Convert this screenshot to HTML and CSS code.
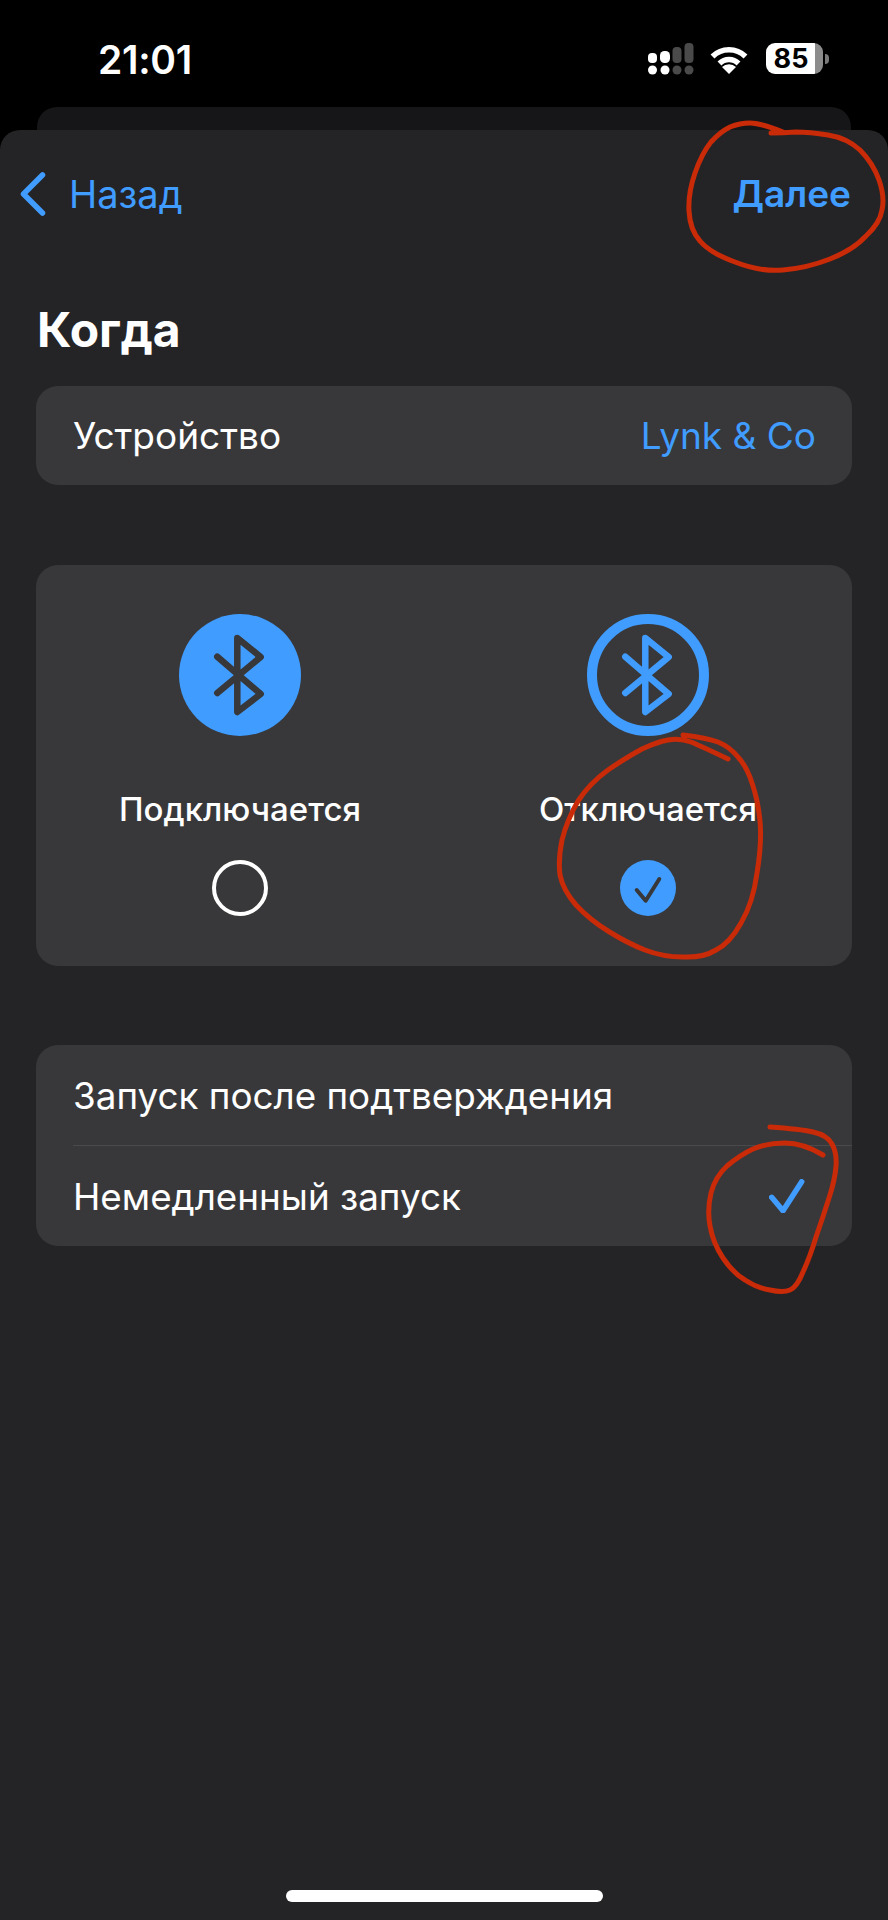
FILE: index.html
```html
<!DOCTYPE html>
<html lang="ru">
<head>
<meta charset="utf-8">
<title>Когда</title>
<link rel="stylesheet" href="styles.css">
</head>
<body>
<div class="screen">
  <header class="status">
    <span class="time">21:01</span>
    <div class="status-icons">
      <svg class="signal" width="48" height="32" viewBox="0 0 48 32">
        <g fill="#fff">
          <rect x="1" y="10" width="9" height="10" rx="4"/><rect x="13" y="8" width="10" height="12" rx="4.500"/>
          <circle cx="5.500" cy="27" r="4.500"/><circle cx="18" cy="27" r="4.500"/>
        </g>
        <g fill="#4a4a4a">
          <rect x="25.500" y="4" width="9" height="16" rx="4"/><rect x="37.500" y="0" width="9" height="20" rx="4"/>
          <circle cx="30" cy="27" r="4.500"/><circle cx="42" cy="27" r="4.500"/>
        </g>
      </svg>
      <svg class="wifi" width="38" height="29" viewBox="0 0 38 29">
        <path d="M2.500 11.500 A23.500 23.500 0 0 1 35.500 11.500" fill="none" stroke="#fff" stroke-width="5.500"/>
        <path d="M9.500 18.500 A13.500 13.500 0 0 1 28.500 18.500" fill="none" stroke="#fff" stroke-width="5.500"/>
        <path d="M19 29 L12 22 A10 10 0 0 1 26 22 Z" fill="#fff"/>
      </svg>
      <div class="battery-wrap">
        <div class="battery">85</div>
        <span class="battery-cap"></span>
      </div>
    </div>
  </header>
  <div class="peek"></div>
  <main class="sheet">
    <nav class="nav">
      <a class="back">
        <svg class="chevron" width="26" height="44" viewBox="0 0 26 44">
          <path d="M22.500 3 L3.500 22 L22.500 41" fill="none" stroke="#409cff" stroke-width="5.500" stroke-linecap="round" stroke-linejoin="round"/>
        </svg>
        <span>Назад</span>
      </a>
      <a class="next">Далее</a>
    </nav>
    <h1 class="title">Когда</h1>
    <section class="card row device">
      <span>Устройство</span>
      <span class="value">Lynk &amp; Co</span>
    </section>
    <section class="card options">
      <div class="option">
        <svg class="bt" width="122" height="122" viewBox="0 0 122 122">
          <circle cx="61" cy="61" r="61" fill="#409cff"/>
          <path d="M38.300 42.700 L81.700 80 L58.300 98 V24 L81.700 43 L38.300 79" fill="none" stroke="#38383a" stroke-width="6.500" stroke-linecap="round" stroke-linejoin="round"/>
        </svg>
        <span class="label">Подключается</span>
        <span class="radio"></span>
      </div>
      <div class="option">
        <svg class="bt" width="122" height="122" viewBox="0 0 122 122">
          <circle cx="61" cy="61" r="56" fill="none" stroke="#409cff" stroke-width="10"/>
          <path d="M38.300 42.700 L81.700 80 L58.300 98 V24 L81.700 43 L38.300 79" fill="none" stroke="#409cff" stroke-width="6.500" stroke-linecap="round" stroke-linejoin="round"/>
        </svg>
        <span class="label">Отключается</span>
        <svg class="radio-on" width="56" height="56" viewBox="0 0 56 56">
          <circle cx="28" cy="28" r="28" fill="#409cff"/>
          <path d="M16.700 30 L25.700 40.700 L39.300 19" fill="none" stroke="#38383a" stroke-width="4" stroke-linecap="round" stroke-linejoin="round"/>
        </svg>
      </div>
    </section>
    <section class="card list">
      <div class="row item"><span>Запуск после подтверждения</span></div>
      <div class="row">
        <span>Немедленный запуск</span>
        <svg class="tick" width="36" height="34" viewBox="0 0 36 34">
          <path d="M2.700 18.300 L14 31.700 L32.700 2.700" fill="none" stroke="#409cff" stroke-width="5.500" stroke-linecap="round" stroke-linejoin="round"/>
        </svg>
      </div>
    </section>
    <div class="home-bar"></div>
  </main>
  <svg class="ink" width="888" height="1920" viewBox="0 0 888 1920">
    <path d="M783 132 Q760 123 750 123 Q740 123 730 127 Q720 132 711 142 Q702 153 695 173 Q688 193 689 211 Q690 230 700 241 Q710 253 735 262 Q760 272 783 270 Q807 268 830 259 Q853 250 866 236 Q880 223 882 210 Q885 197 879 180 Q873 163 860 150 Q847 138 828 135 Q810 132 796 132 Q783 133 771 133"/>
    <path d="M728 759 Q703 747 691 742 Q680 738 668 740 Q657 742 642 749 Q627 757 608 770 Q590 783 578 801 Q567 820 562 840 Q558 860 560 875 Q563 890 576 905 Q590 920 608 931 Q627 943 645 950 Q663 957 683 957 Q703 958 716 950 Q730 943 741 923 Q753 903 757 873 Q762 843 760 821 Q758 800 752 783 Q747 767 738 757 Q730 747 718 742 Q707 738 683 735"/>
    <path d="M770 1127 Q800 1129 813 1132 Q827 1135 832 1144 Q837 1153 836 1166 Q835 1180 829 1198 Q823 1217 816 1237 Q810 1257 803 1272 Q797 1287 790 1290 Q783 1293 770 1290 Q757 1288 745 1280 Q733 1273 723 1258 Q713 1243 710 1226 Q707 1210 711 1193 Q715 1177 727 1166 Q740 1155 753 1149 Q767 1143 785 1143 Q803 1143 823 1155"/>
  </svg>
</div>
</body>
</html>
```
FILE: styles.css
```css
* { box-sizing: border-box; }
html, body { margin: 0; padding: 0; background: #000; }
body { font-family: Inter, "Liberation Sans", sans-serif; color: #fff; }
.screen { position: relative; width: 888px; height: 1920px; overflow: hidden; display: flex; flex-direction: column; }

.status { height: 107px; flex: none; display: flex; justify-content: space-between; align-items: flex-start; padding: 0 59px 0 98px; }
.time { font-size: 39px; font-weight: 600; line-height: 44px; margin-top: 38px; letter-spacing: -0.3px; }
.status-icons { display: flex; align-items: flex-start; margin-top: 43px; }
.signal { margin-right: 15px; }
.wifi { margin-top: 2px; margin-right: 18px; }
.battery-wrap { display: flex; align-items: center; }
.battery { width: 57px; height: 31px; border-radius: 9px; background: linear-gradient(90deg, #fff 86%, #8c8c8c 86%); color: #000; font-size: 27px; font-weight: 700; line-height: 31px; text-align: center; padding-right: 7px; }
.battery-cap { width: 4px; height: 10px; margin-left: 2px; background: #7a7a7a; border-radius: 0 5px 5px 0; }

.peek { height: 23px; flex: none; margin: 0 37px; background: #161618; border-radius: 20px 20px 0 0; }

.sheet { flex: 1; display: flex; flex-direction: column; background: #242426; border-radius: 20px 20px 0 0; padding: 0 36px; }
.nav { height: 127px; flex: none; display: flex; justify-content: space-between; align-items: center; margin: 0 1px 0 -16px; }
.back { display: flex; align-items: center; color: #409cff; font-size: 38px; gap: 23px; }
.next { color: #409cff; font-size: 37px; font-weight: 600; }
.title { margin: 43px 0 26px 1px; font-size: 48px; line-height: 60px; font-weight: 700; height: 60px; }

.card { background: #38383a; border-radius: 22px; font-size: 37px; }
.row { display: flex; justify-content: space-between; align-items: center; height: 100px; padding: 0 36px 0 37px; }
.device { margin-bottom: 80px; height: 99px; }
.value { color: #409cff; }

.options { display: grid; grid-template-columns: 1fr 1fr; height: 401px; margin-bottom: 79px; }
.option { display: flex; flex-direction: column; align-items: center; padding-top: 49px; }
.label { font-size: 33px; line-height: 40px; margin-top: 53px; margin-bottom: 1px; font-weight: 500; }
.radio { width: 56px; height: 56px; margin-top: 30px; border-radius: 50%; border: 4px solid #fff; }
.radio-on { margin-top: 30px; }

.list { height: 201px; font-size: 36.8px; }
.item { position: relative; height: 100px; }
.item::after { content: ""; position: absolute; left: 37px; right: 0; bottom: -1px; height: 1px; background: #4a4a4c; }
.list .row:last-child { height: 101px; padding-top: 1px; padding-right: 47px; }

.home-bar { width: 317px; height: 12px; margin: auto 0 18px 250px; background: #fff; border-radius: 6px; flex: none; }

.ink { position: absolute; top: 0; left: 0; pointer-events: none; }
.ink path { fill: none; stroke: #c92a08; stroke-width: 5; stroke-linecap: round; stroke-linejoin: round; }
```
